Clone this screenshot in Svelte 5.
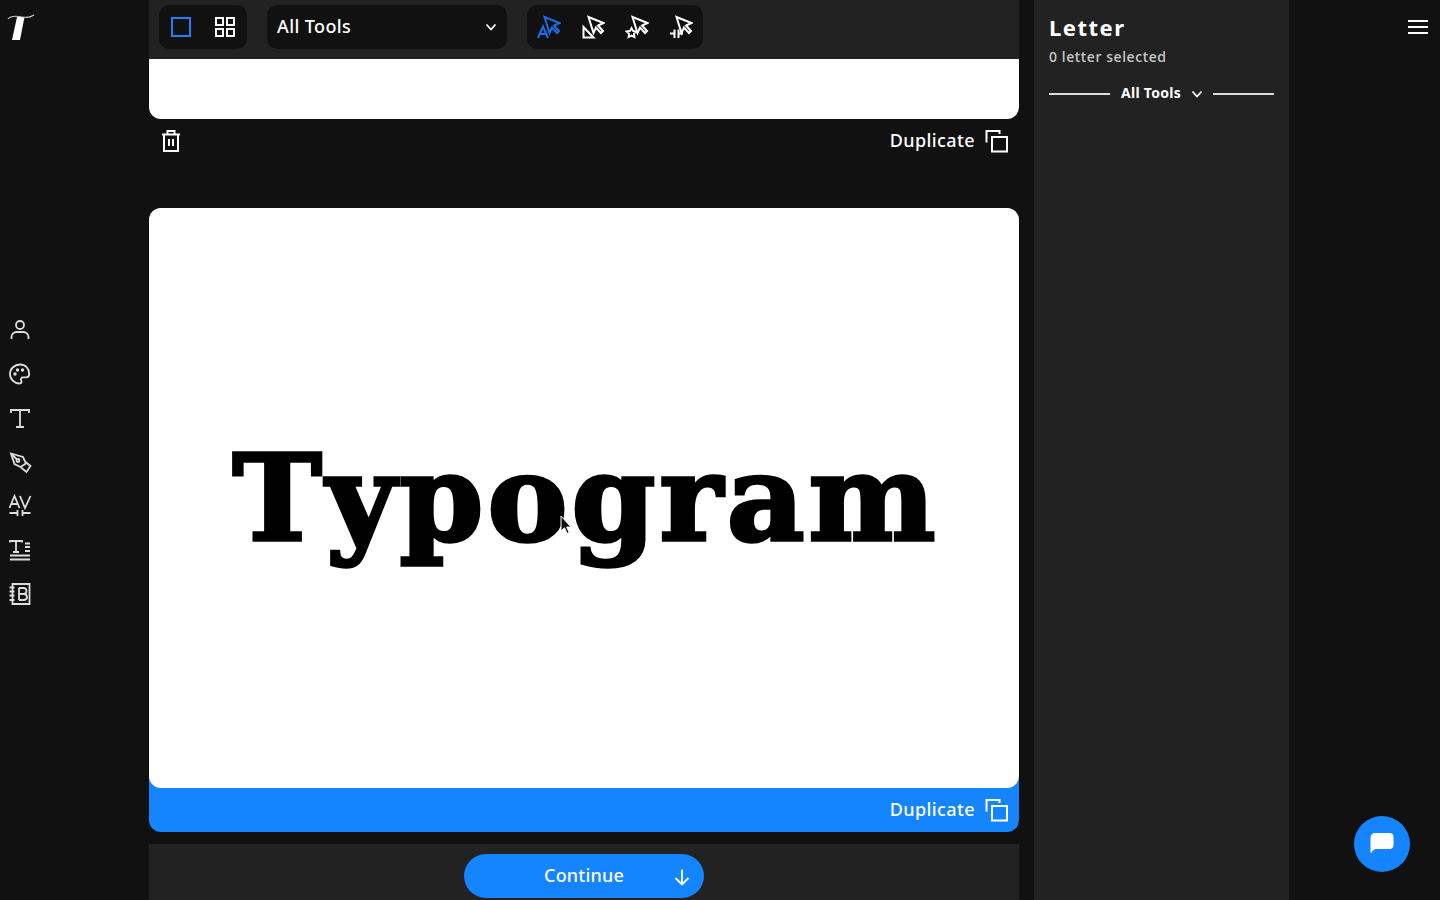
<script>
  const railIcons = ["user", "palette", "type", "pen", "kerning", "lines", "book"];
  const modes = ["letter", "shape", "star", "space"];
</script>

{#snippet copyIcon()}
  <svg width="24" height="24" viewBox="0 0 24 24" fill="none" stroke="currentColor" stroke-width="2">
    <path d="M1.500 13.500V2h13v3" />
    <rect x="7" y="8" width="15" height="14.500" />
  </svg>
{/snippet}

{#snippet pointer()}
  <path d="M7.500 2 22.500 8 17 10.500 22 16l-2 2-5-5.500L12.500 18Z" />
{/snippet}

{#snippet chevron()}
  <svg width="12" height="12" viewBox="0 0 12 12" fill="none" stroke="currentColor" stroke-width="1.800">
    <path d="M1.500 3.500 6 8.500l4.500-5" />
  </svg>
{/snippet}

<div class="page">
  <nav class="rail">
    <svg width="40" height="40" viewBox="0 0 40 40">
      <path d="M17 17h7.500L20 40H12Z" fill="#fff" />
      <path d="M8 19C11 15 17 16 22 17 27 18 31 17 34 15" fill="none" stroke="#c9c9c9" stroke-width="1.200" />
    </svg>
    <div class="rail-icons">
      {#each railIcons as name}
        <svg width="24" height="24" viewBox="0 0 24 24" fill="none" stroke="#ddd" stroke-width="1.800">
          {#if name === "user"}
            <circle cx="12" cy="7" r="4" />
            <path d="M3.500 21v-2c0-3 2.500-5 5-5h7c2.500 0 5 2 5 5v2" />
          {:else if name === "palette"}
            <path d="M12 2.500c-5.500 0-10 4.200-10 9.500s4.500 9.500 9.500 9.500c2.200 0 2.500-1.800 1.700-3-.9-1.500 0-3.200 2-3.200h3c1.800 0 3-1.500 3-3.300C21.200 6.500 17.500 2.500 12 2.500Z" />
            <circle cx="7" cy="12" r=".8" fill="#ddd" />
            <circle cx="9.500" cy="8" r=".8" fill="#ddd" />
            <circle cx="14.500" cy="8" r=".8" fill="#ddd" />
          {:else if name === "type"}
            <path d="M3 7V4h18v3M12 4v17M8 21h8" />
          {:else if name === "pen"}
            <path d="M3 3.500 15 7l3 6.500-5.500 3.500-6-3Z" />
            <path d="m17.500 12 5 4-4 6-5.500-4.500" />
            <circle cx="10" cy="10.500" r="1.500" />
            <path d="M3 3.500 9 9.500" />
          {:else if name === "kerning"}
            <path d="m1.500 14 5-12 5 12M3.500 10h6M12 2l5 12 5.500-12" />
            <path d="M1.500 19h8M9.500 16v6M14.500 16v6M14.500 19h8" />
          {:else if name === "lines"}
            <path d="M2 4.500V3h12v1.500M8 3v11M5 14h6M17 5.500h5M17 9h5M17 13h5M2 17.500h20M2 21.500h20" />
          {:else}
            <path d="M4.500 2h17v20h-17Z" />
            <path d="M1.500 5.500h5M1.500 9.500h5M1.500 13.500h5M1.500 18h5" />
            <path d="M11 6v12M11 6h4.500c2 0 3 1.200 3 3s-1 3-3 3H11M15.500 12c2.200 0 3.500 1.200 3.500 3s-1.300 3-3.500 3H11" />
          {/if}
        </svg>
      {/each}
    </div>
  </nav>

  <main class="main">
    <div class="toolbar">
      <div class="group view-group">
        <svg width="24" height="24" viewBox="0 0 24 24" fill="none" stroke="#1a82ff" stroke-width="2">
          <rect x="3" y="3" width="18" height="18" />
        </svg>
        <svg width="24" height="24" viewBox="0 0 24 24" fill="none" stroke="#fff" stroke-width="2">
          <rect x="3" y="3" width="7" height="7" />
          <rect x="14" y="3" width="7" height="7" />
          <rect x="3" y="14" width="7" height="7" />
          <rect x="14" y="14" width="7" height="7" />
        </svg>
      </div>
      <div class="group select">
        <span class="label">All Tools</span>
        {@render chevron()}
      </div>
      <div class="group mode-group">
        {#each modes as mode, i}
          <svg class:active={i === 0} width="24" height="24" viewBox="0 0 24 24" fill="none" stroke="currentColor" stroke-width="2">
            {@render pointer()}
            {#if mode === "letter"}
              <path d="m1 23 5-11.500L11 23M2.800 19h6.400" />
            {:else if mode === "shape"}
              <path d="M2.500 12v10.500h10Z" />
            {:else if mode === "star"}
              <path d="m6.500 13 1.500 3 3.400.5-2.500 2.300.6 3.400-3-1.600-3 1.600.6-3.400L1.600 16.500 5 16Z" stroke-width="1.800" />
            {:else}
              <path d="M1 18.500h4.500M5.500 14.500v8.500M9.500 14.500v8.500M9.500 18.500H14" />
            {/if}
          </svg>
        {/each}
      </div>
    </div>

    <div class="sheet-rest"></div>
    <div class="actions">
      <svg width="24" height="24" viewBox="0 0 24 24" fill="none" stroke="#fff" stroke-width="2">
        <path d="M3 5.500h18M5 5.500V22h14V5.500M8.500 5V2h7v3M10 10v7M14 10v7" />
      </svg>
      <span class="duplicate"><span class="label">Duplicate</span> {@render copyIcon()}</span>
    </div>

    <section class="card">
      <div class="sheet">
        <h1>Typogram</h1>
      </div>
      <div class="actions selected">
        <span class="duplicate"><span class="label">Duplicate</span> {@render copyIcon()}</span>
      </div>
    </section>

    <div class="footer">
      <button type="button" class="continue">
        <span class="label">Continue</span>
        <svg width="20" height="20" viewBox="0 0 20 20" fill="none" stroke="#fff" stroke-width="1.800">
          <path d="M10 2.500v15M3.500 11l6.500 6.500 6.500-6.500" />
        </svg>
      </button>
    </div>
  </main>

  <aside class="panel">
    <h2>Letter</h2>
    <p>0 letter selected</p>
    <div class="divider">
      <span class="line"></span>
      <strong>All Tools</strong>
      {@render chevron()}
      <span class="line"></span>
    </div>
  </aside>

  <div class="right">
    <svg width="20" height="16" viewBox="0 0 20 16" stroke="#fff" stroke-width="2">
      <path d="M0 2h20M0 8h20M0 14h20" />
    </svg>
  </div>

  <button type="button" class="chat" aria-label="Chat">
    <svg width="26" height="26" viewBox="0 0 26 26" fill="#fff">
      <path d="M6 2h14.500a4 4 0 0 1 4 4v8a4 4 0 0 1-4 4H6.500c-1 0-3 2-4 3.500-.5.500-1 .2-1-.5V6.500A4.500 4.500 0 0 1 6 2Z" />
    </svg>
  </button>

  <svg class="cursor" width="13" height="20" viewBox="0 0 13 20">
    <path d="M1 1v15l3.500-3.200 2.500 5.700 2.200-1-2.500-5.500H11Z" fill="#111" stroke="#fff" stroke-width="1" />
  </svg>
</div>

<style>
  :global(body) {
    background: #111;
  }

  .page {
    position: relative;
    display: flex;
    height: 900px;
    overflow: hidden;
    background: #111;
    color: #fff;
    font-family: "Noto Sans", sans-serif;
  }

  .rail {
    width: 40px;
    flex: none;
    display: flex;
    flex-direction: column;
    align-items: center;
  }

  .rail > svg {
    flex: none;
  }

  .rail-icons {
    margin-top: 278px;
    display: flex;
    flex-direction: column;
    gap: 20px;
  }

  .rail-icons svg {
    display: block;
  }

  .main {
    width: 870px;
    margin-left: 109px;
    flex: none;
    display: flex;
    flex-direction: column;
  }

  .toolbar {
    height: 59px;
    background: #222;
    display: flex;
    gap: 20px;
    padding: 5px 10px 10px;
    box-sizing: border-box;
  }

  .group {
    height: 44px;
    background: #111;
    border-radius: 10px;
    display: flex;
    align-items: center;
  }

  .view-group {
    width: 88px;
    padding: 0 10px;
    box-sizing: border-box;
    justify-content: space-between;
  }

  .label {
    font-size: 18px;
    font-weight: 500;
    letter-spacing: 0.4px;
    margin-bottom: 2px;
  }

  .select {
    width: 240px;
    padding: 0 10px;
    box-sizing: border-box;
    justify-content: space-between;
  }

  .mode-group {
    width: 176px;
    padding: 0 10px;
    box-sizing: border-box;
    justify-content: space-between;
    color: #fff;
  }

  .mode-group .active {
    color: #1a6fe8;
  }

  .sheet-rest {
    height: 60px;
    background: #fff;
    border-radius: 0 0 12px 12px;
  }

  .actions {
    height: 44px;
    padding: 0 10px;
    display: flex;
    align-items: center;
    justify-content: space-between;
  }

  .card {
    margin-top: 45px;
    background: #1584ff;
    border-radius: 12px;
  }

  .sheet {
    height: 580px;
    background: #fff;
    border-radius: 12px;
    display: flex;
    align-items: center;
    justify-content: center;
  }

  h1 {
    margin: 0 -4px 0 0;
    color: #000;
    font-family: "DejaVu Serif", serif;
    font-size: 120px;
    font-weight: 700;
    font-kerning: none;
    line-height: 1;
    letter-spacing: 4px;
    -webkit-text-stroke: 3.500px #000;
  }

  .actions.selected {
    justify-content: flex-end;
  }

  .duplicate {
    display: inline-flex;
    align-items: center;
    gap: 10px;
  }

  .footer {
    margin-top: 12px;
    height: 56px;
    background: #222;
    display: flex;
    justify-content: center;
    padding-top: 10px;
    box-sizing: border-box;
  }

  .continue {
    position: relative;
    width: 240px;
    height: 44px;
    padding: 0 0 2px;
    border: none;
    border-radius: 22px;
    background: #1584ff;
    color: #fff;
    font-family: "Noto Sans", sans-serif;
  }

  .continue .label {
    letter-spacing: 0.2px;
    margin: 0;
  }

  .continue svg {
    position: absolute;
    right: 12px;
    top: 13px;
  }

  .panel {
    width: 255px;
    margin-left: 15px;
    flex: none;
    background: #222;
    padding: 12px 15px;
    box-sizing: border-box;
  }

  h2 {
    margin: 0;
    font-size: 22px;
    font-weight: 700;
    line-height: 30px;
    letter-spacing: 1.500px;
  }

  .panel p {
    margin: 6px 0 0;
    font-size: 14px;
    font-weight: 500;
    line-height: 18px;
    letter-spacing: 0.6px;
    color: #ccc;
  }

  .divider {
    margin-top: 17px;
    display: flex;
    align-items: center;
    font-size: 14px;
    line-height: 20px;
    letter-spacing: 0.3px;
    color: #fff;
  }

  .divider strong {
    flex: 1;
    margin-left: 11px;
    margin-bottom: 1px;
    font-weight: 700;
    white-space: nowrap;
  }

  .line {
    width: 61px;
    height: 2px;
    background: #ddd;
  }

  .line:last-child {
    margin-left: 10px;
  }

  .right {
    flex: 1;
    display: flex;
    justify-content: flex-end;
    padding: 19px 12px 0 0;
    align-items: flex-start;
  }

  .chat {
    position: absolute;
    left: 1354px;
    top: 816px;
    width: 56px;
    height: 56px;
    padding: 0;
    border: none;
    border-radius: 50%;
    background: #1584ff;
    display: flex;
    align-items: center;
    justify-content: center;
  }

  .cursor {
    position: absolute;
    left: 560px;
    top: 515px;
  }
</style>
